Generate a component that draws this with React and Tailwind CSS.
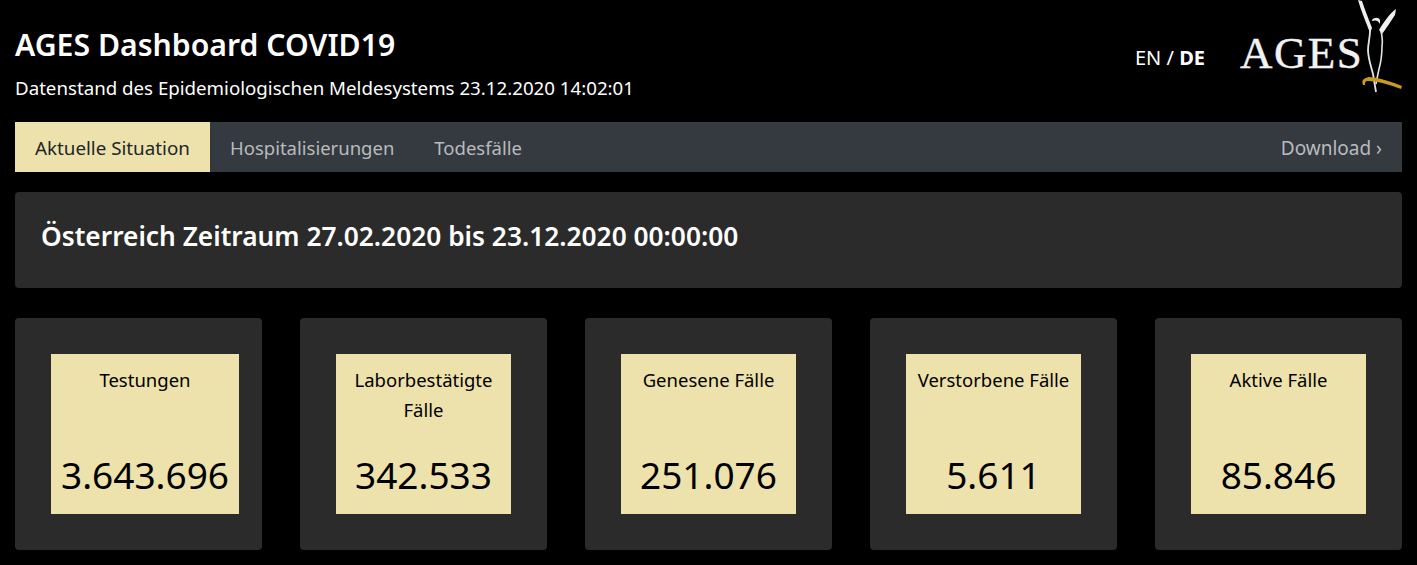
const stats = [
  { label: "Testungen", value: "3.643.696" },
  { label: "Laborbestätigte Fälle", value: "342.533" },
  { label: "Genesene Fälle", value: "251.076" },
  { label: "Verstorbene Fälle", value: "5.611" },
  { label: "Aktive Fälle", value: "85.846" },
];

function Logo() {
  return (
    <div className="relative w-[163px] h-[93px] shrink-0">
      <span className="absolute left-0 top-[28px] text-[#f2f2f2] text-[45px] leading-[50px] tracking-[1.4px] [-webkit-text-stroke:0.4px_#f2f2f2] font-['Liberation_Serif',serif]">AGES</span>
      <svg className="absolute left-0 top-0" width="163" height="93" viewBox="0 0 163 93">
        <path d="M118 0 L122 1 C125 10 129 20 132 28 L130 33 C126 22 121 11 118 0 Z" fill="#f0f0f0" />
        <path d="M156 9 L155 15 C151 21 146 29 142 34 L139 30 C144 22 149 14 156 9 Z" fill="#f0f0f0" />
        <path d="M130 31 C130 38 128 44 128 50 C128 58 131 66 133 74 C134 80 135 86 136 92" fill="none" stroke="#e4e4e4" strokeWidth="1.8" />
        <path d="M141 31 C142 36 143 40 142 46 C142 54 141 62 139 69 C138 74 137 78 136 84" fill="none" stroke="#e4e4e4" strokeWidth="1.6" />
        <path d="M132 20 C134 17 139 17 140 20 L140 24 C138 20 135 20 132 21 Z" fill="#e8e8e8" />
        <path d="M123 85 C121 80 124 78 129 77 C141 78 152 82 162 86 L161 89 C150 85 138 81 128 81 C125 81 125 83 125 85 Z" fill="#c99a1e" />
      </svg>
    </div>
  );
}

export default function App() {
  return (
    <div className="min-h-[565px] bg-black px-[15px] font-['Noto_Sans',sans-serif] text-white">
      <header className="flex h-[122px] items-start justify-between">
        <div className="pt-[27px]">
          <h1 className="text-[30.2px] leading-[36px] font-semibold">AGES Dashboard COVID19</h1>
          <p className="mt-[11px] text-[18.7px] leading-[27px]">Datenstand des Epidemiologischen Meldesystems 23.12.2020 14:02:01</p>
        </div>
        <div className="flex items-start">
          <div className="mt-[44px] mr-[35px] text-[20px] leading-[27px]">EN / <b className="font-bold">DE</b></div>
          <div className="mr-[-1px]"><Logo /></div>
        </div>
      </header>

      <nav className="flex h-[50px] items-stretch bg-[#343a40] pb-[-1px] text-[18.5px] leading-[28px] text-[#b9bbbd]">
        <a className="flex w-[195px] items-center bg-[#eee2ac] pt-[1px] pl-[20px] text-[18.8px] text-[#212529]">Aktuelle Situation</a>
        <a className="flex items-center px-[20px] pt-[1px]">Hospitalisierungen</a>
        <a className="flex items-center px-[20px] pt-[1px]">Todesfälle</a>
        <a className="ml-auto flex items-center px-[20px] pt-[1px] text-[19px]">Download ›</a>
      </nav>

      <section className="mt-[20px] h-[96px] rounded-[4px] bg-[#2b2b2b] px-[26px] pt-[26px]">
        <h2 className="text-[26.3px] leading-[36px] font-semibold">Österreich Zeitraum 27.02.2020 bis 23.12.2020 00:00:00</h2>
      </section>

      <section className="mt-[30px] grid grid-cols-5 gap-[38px]">
        {stats.map((s) => (
          <div key={s.label} className="flex h-[232px] min-w-0 items-start rounded-[4px] bg-[#2b2b2b] px-[36px] pt-[36px]">
            <div className="flex h-[160px] min-w-full flex-none flex-col items-center bg-[#eee2ac] text-black">
              <div className="w-[175px] px-[10px] pt-[11px] text-center text-[18.5px] leading-[30px]">{s.label}</div>
              <div className="mt-auto mb-[14px] px-[10px] text-[37px] leading-[50px]">{s.value}</div>
            </div>
          </div>
        ))}
      </section>
    </div>
  );
}
